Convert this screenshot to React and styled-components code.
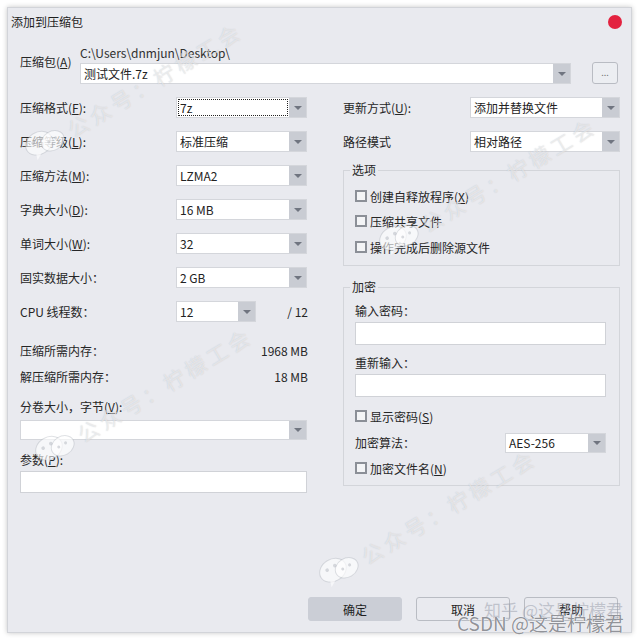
import React from "react"
import styled, { createGlobalStyle } from "styled-components"

const GlobalStyle = createGlobalStyle`
  html, body {
    margin: 0;
    padding: 0;
    background: #ffffff;
  }
  body {
    font-family: "Noto Sans CJK SC", "Noto Sans", sans-serif;
    font-size: 12px;
    color: #262626;
  }
`

const Page = styled.div`
  position: relative;
  width: 641px;
  height: 644px;
  padding: 7px;
  box-sizing: border-box;
  overflow: hidden;
`

const Dialog = styled.div`
  position: relative;
  width: 625px;
  height: 626px;
  box-sizing: border-box;
  background: #e9eaef;
  border: 1px solid #d2d4d9;
  box-shadow: 0 0 5px rgba(0, 0, 0, 0.22);
  display: flex;
  flex-direction: column;
  overflow: hidden;
`

const TitleBar = styled.div`
  height: 27px;
  display: flex;
  align-items: center;
  justify-content: space-between;
  padding: 0 9px 0 3px;
`

const Title = styled.div`
  font-size: 12px;
  line-height: 14px;
  color: #1e1e1e;
  margin-top: 1px;
`

const CloseDot = styled.div`
  width: 14px;
  height: 14px;
  border-radius: 50%;
  background: #e3223f;
`

const Body = styled.div`
  flex: 1;
  padding: 0 11px 0 12px;
`

const ArchiveRow = styled.div`
  display: flex;
  align-items: flex-start;
  margin-top: 11px;
`

const ArchiveLabel = styled.div`
  width: 60px;
  line-height: 14px;
  margin-top: 9px;
`

const ArchiveField = styled.div`
  width: 491px;
  display: flex;
  flex-direction: column;
`

const PathText = styled.div`
  line-height: 14px;
  margin-bottom: 3px;
  color: #303030;
`

const BrowseButton = styled.div`
  width: 26px;
  height: 22px;
  box-sizing: border-box;
  margin: 16px 0 0 21px;
  border: 1px solid #b9bcc3;
  border-radius: 3px;
  background: #eceef2;
  color: #777;
  font-size: 9px;
  line-height: 20px;
  text-align: center;
`

const ComboBox = styled.div`
  display: flex;
  width: ${({ $w }) => $w}px;
  height: ${({ $h }) => $h || 21}px;
  box-sizing: border-box;
  border: 1px solid #d4d6db;
  background: #ffffff;
  flex-shrink: 0;
`

const ComboValue = styled.div`
  flex: 1;
  padding-left: 3px;
  display: flex;
  align-items: center;
  color: #222;
  font-size: 12px;
  white-space: nowrap;
  outline: ${({ $focus }) => ($focus ? "1px dotted #222" : "none")};
  outline-offset: -2px;
`

const ComboArrow = styled.div`
  width: 17px;
  background: #c9ccd3;
  display: flex;
  align-items: center;
  justify-content: center;

  &::after {
    content: "";
    border-left: 4px solid transparent;
    border-right: 4px solid transparent;
    border-top: 4px solid #707580;
  }
`

const TextInput = styled.div`
  width: ${({ $w }) => $w}px;
  height: ${({ $h }) => $h || 22}px;
  box-sizing: border-box;
  border: 1px solid #d0d2d7;
  background: #ffffff;
  margin-top: ${({ $mt }) => $mt || 0}px;
`

const Columns = styled.div`
  display: flex;
  gap: 35px;
  margin-top: 13px;
`

const LeftCol = styled.div`
  width: 288px;
  display: flex;
  flex-direction: column;
`

const RightCol = styled.div`
  width: 277px;
  display: flex;
  flex-direction: column;
`

const FieldRow = styled.div`
  display: flex;
  align-items: center;
  height: 21px;
  margin-top: ${({ $mt }) => $mt || 0}px;
`

const FieldLabel = styled.div`
  width: ${({ $w }) => $w}px;
  flex-shrink: 0;
  line-height: 14px;
`

const Trail = styled.div`
  margin-left: auto;
  line-height: 14px;
`

const InfoRow = styled.div`
  display: flex;
  justify-content: space-between;
  line-height: 14px;
  margin-top: ${({ $mt }) => $mt || 0}px;
`

const PlainLabel = styled.div`
  line-height: 14px;
  margin-top: ${({ $mt }) => $mt || 0}px;
`

const Group = styled.fieldset`
  margin: ${({ $mt }) => $mt || 0}px 0 0 0;
  padding: 0 11px ${({ $pb }) => $pb || 10}px 11px;
  border: 1px solid #d3d5da;
  min-inline-size: 0;
  display: flex;
  flex-direction: column;
`

const Legend = styled.legend`
  padding: 0 2px;
  margin-left: -5px;
  line-height: 14px;
  font-size: 12px;
`

const CheckRow = styled.div`
  display: flex;
  align-items: center;
  height: 16px;
  margin-top: ${({ $mt }) => $mt || 0}px;
`

const CheckBox = styled.div`
  width: 12px;
  height: 12px;
  box-sizing: border-box;
  border: 2px solid #8b8f97;
  background: #f3f4f6;
  margin-right: 3px;
`

const Footer = styled.div`
  display: flex;
  justify-content: flex-end;
  gap: 14px;
  padding: 0 13px 11px 0;
`

const Button = styled.div`
  width: 94px;
  height: 24px;
  box-sizing: border-box;
  border-radius: 3px;
  border: 1px solid ${({ $primary }) => ($primary ? "#cbced6" : "#b9bcc3")};
  background: ${({ $primary }) => ($primary ? "#cbced6" : "#e9eaef")};
  display: flex;
  align-items: center;
  justify-content: center;
  color: #1f1f1f;
`

const Watermark = styled.div`
  position: absolute;
  left: ${({ $x }) => $x}px;
  top: ${({ $y }) => $y}px;
  height: 30px;
  display: flex;
  align-items: flex-end;
  gap: 4px;
  transform: rotate(-31deg);
  transform-origin: 0 100%;
  pointer-events: none;
  white-space: nowrap;
`

const WatermarkText = styled.span`
  font-size: 21px;
  line-height: 24px;
  letter-spacing: 4px;
  font-weight: 400;
  color: rgba(255, 255, 255, 0.5);
  text-shadow: 0 0 1px rgba(120, 125, 135, 0.35);
`

const SiteMarks = styled.div`
  position: absolute;
  right: 17px;
  bottom: 10px;
  display: flex;
  flex-direction: column;
  align-items: flex-end;
  pointer-events: none;
  white-space: nowrap;
`

const ZhihuMark = styled.div`
  font-size: 17px;
  line-height: 18px;
  color: rgba(150, 155, 168, 0.5);
  margin-bottom: -7px;
  margin-right: 1px;
`

const CsdnMark = styled.div`
  font-size: 19px;
  line-height: 22px;
  color: rgba(125, 128, 135, 0.85);
  text-shadow: 0 0 1px #fff, 0 0 1px #fff;
`

function Key({ k }) {
  return (
    <>
      (<u>{k}</u>)
    </>
  )
}

function Combo({ value, w, h, focus }) {
  return (
    <ComboBox $w={w} $h={h}>
      <ComboValue $focus={focus}>{value}</ComboValue>
      <ComboArrow />
    </ComboBox>
  )
}

function Bubble() {
  return (
    <svg width="44" height="30" viewBox="0 0 44 30">
      <ellipse cx="16" cy="13" rx="14" ry="11" fill="rgba(255,255,255,0.6)" stroke="rgba(150,155,165,0.3)" />
      <path d="M8 21 L6 27 L13 23 Z" fill="rgba(255,255,255,0.6)" />
      <ellipse cx="29" cy="18" rx="12" ry="9.5" fill="rgba(255,255,255,0.65)" stroke="rgba(150,155,165,0.3)" />
      <circle cx="11" cy="10" r="1.8" fill="rgba(170,175,185,0.45)" />
      <circle cx="20" cy="10" r="1.8" fill="rgba(170,175,185,0.45)" />
      <circle cx="25" cy="17" r="1.5" fill="rgba(170,175,185,0.45)" />
      <circle cx="33" cy="17" r="1.5" fill="rgba(170,175,185,0.45)" />
    </svg>
  )
}

function Mark({ x, y }) {
  return (
    <Watermark $x={x} $y={y}>
      <Bubble />
      <WatermarkText>公众号：柠檬工会</WatermarkText>
    </Watermark>
  )
}

const leftFields = [
  { label: <>压缩格式<Key k="F" />:</>, value: "7z", focus: true },
  { label: <>压缩等级<Key k="L" />:</>, value: "标准压缩" },
  { label: <>压缩方法<Key k="M" />:</>, value: "LZMA2" },
  { label: <>字典大小<Key k="D" />:</>, value: "16 MB" },
  { label: <>单词大小<Key k="W" />:</>, value: "32" },
  { label: "固实数据大小：", value: "2 GB" },
]

export default function App() {
  return (
    <Page>
      <GlobalStyle />
      <Dialog>
        <TitleBar>
          <Title>添加到压缩包</Title>
          <CloseDot />
        </TitleBar>
        <Body>
          <ArchiveRow>
            <ArchiveLabel>压缩包<Key k="A" /></ArchiveLabel>
            <ArchiveField>
              <PathText>C:\Users\dnmjun\Desktop\</PathText>
              <Combo value="测试文件.7z" w={491} h={21} />
            </ArchiveField>
            <BrowseButton>...</BrowseButton>
          </ArchiveRow>

          <Columns>
            <LeftCol>
              {leftFields.map((f, i) => (
                <FieldRow key={i} $mt={i ? 13 : 0}>
                  <FieldLabel $w={156}>{f.label}</FieldLabel>
                  <Combo value={f.value} w={131} h={21} focus={f.focus} />
                </FieldRow>
              ))}
              <FieldRow $mt={13}>
                <FieldLabel $w={156}>CPU 线程数：</FieldLabel>
                <Combo value="12" w={80} h={21} />
                <Trail>/ 12</Trail>
              </FieldRow>
              <InfoRow $mt={22}>
                <span>压缩所需内存：</span>
                <span>1968 MB</span>
              </InfoRow>
              <InfoRow $mt={12}>
                <span>解压缩所需内存：</span>
                <span>18 MB</span>
              </InfoRow>
              <PlainLabel $mt={16}>分卷大小，字节<Key k="V" />:</PlainLabel>
              <FieldRow $mt={5}>
                <Combo value="" w={287} h={20} />
              </FieldRow>
              <PlainLabel $mt={13}>参数<Key k="P" />:</PlainLabel>
              <TextInput $w={287} $h={22} $mt={4} />
            </LeftCol>

            <RightCol>
              <FieldRow>
                <FieldLabel $w={127}>更新方式<Key k="U" />:</FieldLabel>
                <Combo value="添加并替换文件" w={150} h={21} />
              </FieldRow>
              <FieldRow $mt={13}>
                <FieldLabel $w={127}>路径模式</FieldLabel>
                <Combo value="相对路径" w={150} h={21} />
              </FieldRow>

              <Group $mt={11} $pb={10}>
                <Legend>选项</Legend>
                <CheckRow $mt={11}>
                  <CheckBox />创建自释放程序<Key k="X" />
                </CheckRow>
                <CheckRow $mt={9}>
                  <CheckBox />压缩共享文件
                </CheckRow>
                <CheckRow $mt={10}>
                  <CheckBox />操作完成后删除源文件
                </CheckRow>
              </Group>

              <Group $mt={14} $pb={9}>
                <Legend>加密</Legend>
                <PlainLabel $mt={10}>输入密码：</PlainLabel>
                <TextInput $w={251} $h={23} $mt={4} />
                <PlainLabel $mt={11}>重新输入：</PlainLabel>
                <TextInput $w={251} $h={23} $mt={4} />
                <CheckRow $mt={11}>
                  <CheckBox />显示密码<Key k="S" />
                </CheckRow>
                <FieldRow $mt={8}>
                  <FieldLabel $w={150}>加密算法：</FieldLabel>
                  <Combo value="AES-256" w={101} h={20} />
                </FieldRow>
                <CheckRow $mt={7}>
                  <CheckBox />加密文件名<Key k="N" />
                </CheckRow>
              </Group>
            </RightCol>
          </Columns>
        </Body>

        <Footer>
          <Button $primary>确定</Button>
          <Button>取消</Button>
          <Button>帮助</Button>
        </Footer>

        <Mark x={26} y={128} />
        <Mark x={380} y={223} />
        <Mark x={36} y={433} />
        <Mark x={320} y={555} />
      </Dialog>

      <SiteMarks>
        <ZhihuMark>知乎 @这是柠檬君</ZhihuMark>
        <CsdnMark>CSDN @这是柠檬君</CsdnMark>
      </SiteMarks>
    </Page>
  )
}
